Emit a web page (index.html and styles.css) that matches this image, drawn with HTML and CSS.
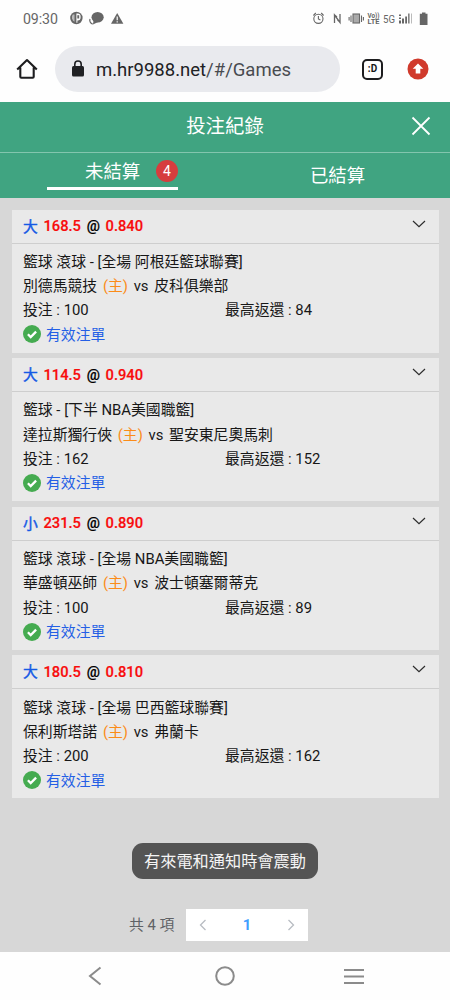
FILE: index.html
```
<!DOCTYPE html>
<html lang="zh-Hant">
<head>
<meta charset="utf-8">
<title>投注紀錄</title>
<link rel="stylesheet" href="styles.css">
</head>
<body>
<svg class="defs" width="0" height="0">
  <symbol id="check" viewBox="0 0 18 18"><circle cx="9" cy="9" r="9" fill="#45ab50"/><path d="M4.9 9.2l2.8 2.8 5.4-5.4" fill="none" stroke="#fff" stroke-width="2.3"/></symbol>
  <symbol id="down" viewBox="0 0 14 8"><path d="M1 1l6 5.7L13 1" fill="none" stroke="#2c2c2c" stroke-width="1.2"/></symbol>
</svg>
<div class="screen">
  <div class="status">
    <span class="clock">09:30</span>
    <svg class="status-left" width="56" height="16" viewBox="0 0 56 16">
      <circle cx="7.400" cy="7" r="6.200" fill="#666"/><path d="M7.400 2.400h1.200a3 3 0 0 1 3 3v1.200a3 3 0 0 1-3 3h-.2v2.200h-1z" fill="#fff"/><path d="M8.300 4.200h1.900v3.300H8.300z" fill="#666"/><path d="M3.800 3.500h1.700v7.300a5 5 0 0 1-1.700-7.300z" fill="#bbb"/>
      <ellipse cx="28.600" cy="6.200" rx="6.100" ry="5.200" fill="#666"/><path d="M24.500 9.500l-.5 3.900 5-2.400z" fill="#666"/><path d="M21 8c-.7 2 .2 4.300 2.700 5.100" fill="none" stroke="#666" stroke-width="1.200"/>
      <path d="M48.200 1.900l6.200 10.900H42z" fill="#666"/><path d="M48.200 5.500v3.800M48.200 10.300v1.300" stroke="#fff" stroke-width="1.200"/>
    </svg>
    <svg class="status-right" width="118" height="18" viewBox="0 0 118 18">
      <g fill="none" stroke="#666" stroke-width="1.100">
        <circle cx="5.400" cy="8.800" r="4.600"/><path d="M5.400 6v3l2 1M.4 5.500L2.800 3M10.600 5.500L8.200 3"/>
        <path d="M21.500 13V5l5.500 7.500V4M21 4.500l3 2.500M27.500 12.500l-3-2.500" stroke-width="1.300"/>
        <rect x="40" y="4" width="6.500" height="9" fill="#aaa"/><path d="M38 5.500V12M48.500 5.500V12M36.100 7v3.500M50.400 7v3.500"/>
      </g>
      <g fill="#666"><text class="lte" x="54.500" y="7.800" textLength="12" lengthAdjust="spacingAndGlyphs">Vo))</text><text class="lte" x="54.500" y="14" textLength="12" lengthAdjust="spacingAndGlyphs">LTE</text><text class="fiveg" x="70" y="12.700" textLength="12" lengthAdjust="spacingAndGlyphs">5G</text>
      <path d="M86 10.500h2v3h-2zM89 8.500h2v5h-2zM92.200 6.500H94v7h-1.800zM86 4.500h2V6h-2zM86 7.500h2V9h-2z"/><path d="M95.200 3.500h1.300v10h-1.300z"/><path d="M98 3.500h1v10h-1z" fill="#bbb"/>
      <path d="M109 2.500h3.500v1.300h2V15h-7.700V3.800h2.200z"/></g>
    </svg>
  </div>
  <div class="browser">
    <svg class="home" width="22" height="22" viewBox="0 0 22 22"><path d="M1.200 11.500L11 2l9.800 9.500M4.300 9.500v9.300q0 1 1 1h11.400q1 0 1-1V9.500" fill="none" stroke="#1d1d1f" stroke-width="2.100" stroke-linejoin="round"/></svg>
    <div class="address">
      <svg width="14" height="18" viewBox="0 0 14 18"><rect x="1" y="6" width="12" height="10.500" rx="1.500" fill="#202124"/><path d="M3.800 7V4.200a3.200 3.200 0 0 1 6.400 0V7" fill="none" stroke="#202124" stroke-width="1.600"/></svg>
      <span>m.hr9988.net<i>/#/Games</i></span>
    </div>
    <div class="tabs-count">:D</div>
    <svg class="update" width="22" height="22" viewBox="0 0 22 22"><circle cx="11" cy="11" r="10.500" fill="#d03a2c"/><path d="M11 5.400l5.300 5.400h-3v4.700H8.700v-4.700h-3z" fill="#fff"/></svg>
  </div>
  <header class="title-bar">
    <h1>投注紀錄</h1>
    <svg class="close" width="20" height="20" viewBox="0 0 20 20"><path d="M1.500 1.500l17 17M18.500 1.500l-17 17" stroke="#fff" stroke-width="1.800"/></svg>
  </header>
  <nav class="tabs">
    <div class="tab"><div class="tab-active">未結算<span class="count">4</span></div></div>
    <div class="tab">已結算</div>
  </nav>
  <main>
    <article class="card">
      <div class="card-head"><b class="pick">大</b><b class="num">168.5</b><b>@</b><b class="num">0.840</b><svg class="down" width="14" height="8"><use href="#down"/></svg></div>
      <div class="card-body">
        <p>籃球 滾球 - [全場 阿根廷籃球聯賽]</p>
        <p class="match">別德馬競技 <span class="host">(主)</span> vs 皮科俱樂部</p>
        <p class="amounts"><span>投注 : 100</span><span>最高返還 : 84</span></p>
        <p class="valid"><svg width="18" height="18"><use href="#check"/></svg>有效注單</p>
      </div>
    </article>
    <article class="card">
      <div class="card-head"><b class="pick">大</b><b class="num">114.5</b><b>@</b><b class="num">0.940</b><svg class="down" width="14" height="8"><use href="#down"/></svg></div>
      <div class="card-body">
        <p>籃球 - [下半 NBA美國職籃]</p>
        <p class="match">達拉斯獨行俠 <span class="host">(主)</span> vs 聖安東尼奧馬刺</p>
        <p class="amounts"><span>投注 : 162</span><span>最高返還 : 152</span></p>
        <p class="valid"><svg width="18" height="18"><use href="#check"/></svg>有效注單</p>
      </div>
    </article>
    <article class="card">
      <div class="card-head"><b class="pick">小</b><b class="num">231.5</b><b>@</b><b class="num">0.890</b><svg class="down" width="14" height="8"><use href="#down"/></svg></div>
      <div class="card-body">
        <p>籃球 滾球 - [全場 NBA美國職籃]</p>
        <p class="match">華盛頓巫師 <span class="host">(主)</span> vs 波士頓塞爾蒂克</p>
        <p class="amounts"><span>投注 : 100</span><span>最高返還 : 89</span></p>
        <p class="valid"><svg width="18" height="18"><use href="#check"/></svg>有效注單</p>
      </div>
    </article>
    <article class="card">
      <div class="card-head"><b class="pick">大</b><b class="num">180.5</b><b>@</b><b class="num">0.810</b><svg class="down" width="14" height="8"><use href="#down"/></svg></div>
      <div class="card-body">
        <p>籃球 滾球 - [全場 巴西籃球聯賽]</p>
        <p class="match">保利斯塔諾 <span class="host">(主)</span> vs 弗蘭卡</p>
        <p class="amounts"><span>投注 : 200</span><span>最高返還 : 162</span></p>
        <p class="valid"><svg width="18" height="18"><use href="#check"/></svg>有效注單</p>
      </div>
    </article>
    <div class="toast">有來電和通知時會震動</div>
    <div class="pagination">
      <span class="total">共 4 項</span>
      <div class="pager">
        <svg width="8" height="12" viewBox="0 0 8 12"><path d="M6.500 1L1.500 6l5 5" fill="none" stroke="#b8bcc2" stroke-width="1.300"/></svg>
        <b>1</b>
        <svg width="8" height="12" viewBox="0 0 8 12"><path d="M1.500 1l5 5-5 5" fill="none" stroke="#b8bcc2" stroke-width="1.300"/></svg>
      </div>
    </div>
  </main>
  <footer class="system-nav">
    <svg width="14" height="20" viewBox="0 0 14 20"><path d="M12.500 1.500L2 10l10.500 8.500" fill="none" stroke="#8b8b8b" stroke-width="2"/></svg>
    <svg width="20" height="20" viewBox="0 0 20 20"><circle cx="10" cy="10" r="8.800" fill="none" stroke="#8b8b8b" stroke-width="2"/></svg>
    <svg width="20" height="20" viewBox="0 0 20 20"><path d="M0 3.900h20M0 10.400h20M0 16.900h20" stroke="#8b8b8b" stroke-width="2"/></svg>
  </footer>
</div>
</body>
</html>
```
FILE: styles.css
```
* { box-sizing: border-box; }
body { margin: 0; font-family: Roboto, "Noto Sans CJK TC", sans-serif; color: #171717; }
h1, p { margin: 0; font-weight: 400; }
svg { display: block; flex: none; }
.defs { position: absolute; }
.screen { width: 450px; height: 1000px; overflow: hidden; display: flex; flex-direction: column; background: #fefefe; }
.status { height: 38px; flex: none; display: flex; align-items: center; padding: 0 19px 0 23px; }
.clock { font-size: 14.200px; color: #666; width: 46px; letter-spacing: -.1px; }
.status-right { margin-left: auto; }
.lte { font-size: 6.800px; font-weight: 700; }
.fiveg { font-size: 11.500px; }
.browser { height: 64px; flex: none; display: flex; align-items: center; padding: 0 21px 2px 16px; }
.address { width: 285px; height: 46px; margin-left: 17px; padding-left: 16px; display: flex; align-items: center; gap: 11px; border-radius: 23px; background: #e9eaee; font-size: 18.500px; color: #202124; white-space: nowrap; }
.address span { padding-top: 1px; }
.address i { font-style: normal; color: #484b50; }
.tabs-count { width: 21px; height: 21px; margin-left: 22px; border: 2px solid #1d1d1f; border-radius: 5px; font-size: 10px; font-weight: 700; line-height: 16px; text-align: center; }
.update { margin-left: auto; }
.title-bar { height: 51px; flex: none; display: grid; grid-template-columns: 50px 1fr 50px; align-items: center; padding: 0 5px; background: #40a481; color: #fff; border-bottom: 1px solid #83c5ae; }
.title-bar h1 { grid-column: 2; font-size: 19.400px; line-height: 28px; text-align: center; padding-bottom: 1px; }
.close { justify-self: center; margin: 0 0 2px 1px; }
.tabs { height: 45px; flex: none; display: grid; grid-template-columns: 1fr 1fr; background: #40a481; color: #fff; font-size: 18.400px; line-height: 45px; text-align: center; }
.tab-active { width: 131px; height: 36.500px; margin-left: 47px; padding: 4px 0 0 38px; display: flex; align-items: center; justify-content: space-between; border-bottom: 3.500px solid #fff; line-height: 29px; white-space: nowrap; }
.count { width: 22px; height: 22px; flex: none; border-radius: 50%; background: #d63d3e; font-size: 14px; line-height: 22px; margin-bottom: 1px; }
main { height: 754px; flex: none; padding: 11.500px 11px 0 12px; background: #d7d7d7; }
.card { height: 143px; margin-bottom: 5.670px; background: #e9e9e9; }
.card-head { height: 34px; display: flex; align-items: center; gap: 5.700px; padding: 0 13px 0 11px; border-bottom: 1px solid #cecece; font-size: 14.700px; color: #000; }
.card-head b { font-weight: 500; -webkit-text-stroke: .2px; }
.card-head .pick { color: #155ae5; font-size: 14.800px; font-weight: 400; -webkit-text-stroke: .4px; margin-top: -2px; }
.card-head .num { color: #f80c0c; }
.down { margin: -5px 0 0 auto; }
.card-body { padding: 6.300px 11px; font-size: 14.850px; line-height: 24.300px; white-space: nowrap; }
.match { word-spacing: 2px; }
.host { color: #fb8c18; }
.amounts { display: grid; grid-template-columns: 202px 1fr; }
.valid { display: flex; align-items: center; gap: 5px; color: #245fe5; }
.valid svg { margin-top: -1px; }
.toast { width: 186px; height: 36px; margin: 44.500px 0 0 120px; border-radius: 11px; background: #545454; color: #f4f4f4; font-size: 16.200px; line-height: 37px; text-align: center; white-space: nowrap; }
.pagination { display: flex; align-items: center; gap: 11px; margin: 30px 0 0 117px; color: #606266; font-size: 14.800px; }
.total { width: 46px; white-space: nowrap; line-height: 28px; }
.pager { width: 122px; height: 32px; padding: 0 13px; display: flex; align-items: center; justify-content: space-between; background: #fff; }
.pager b { color: #409eff; font-weight: 700; }
.system-nav { flex: 1; display: grid; grid-template-columns: 14px 20px 20px; justify-content: start; column-gap: 113px; align-items: center; padding-left: 88px; }
.system-nav svg:last-child { margin-left: -4px; }
```
